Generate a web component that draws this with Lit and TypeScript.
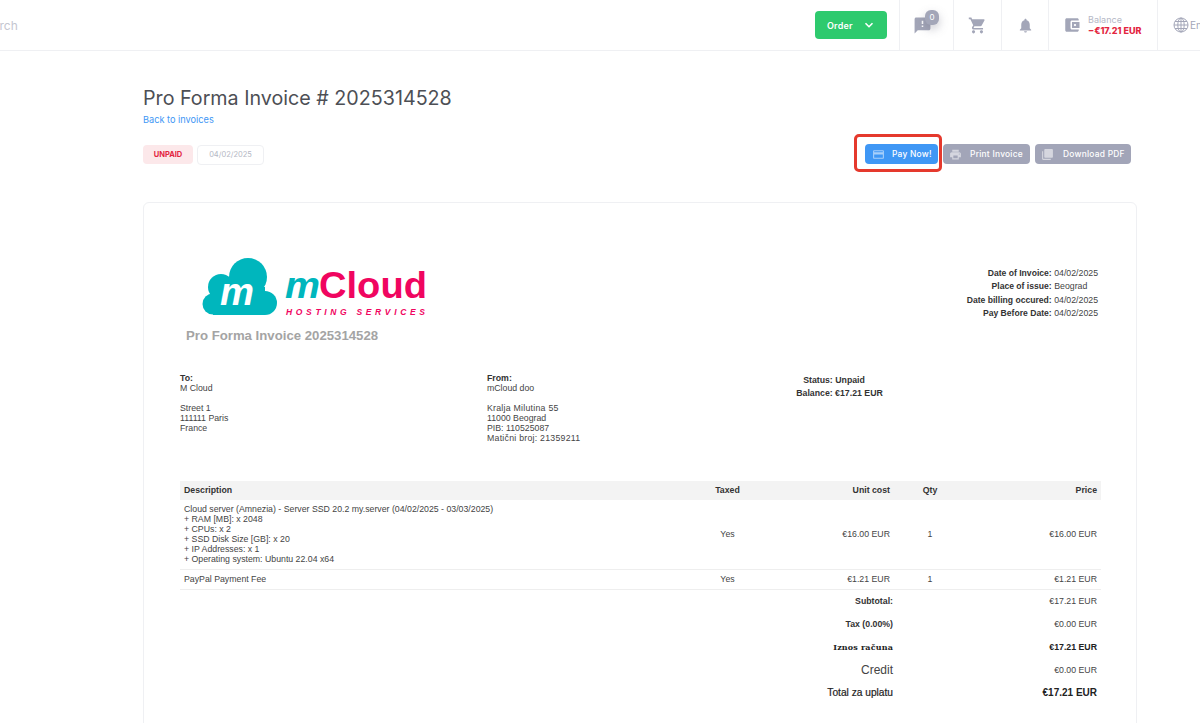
import { LitElement, html, css, svg } from "lit";
import { customElement } from "lit/decorators.js";

const ICONS = {
  chat: "M20 2H4c-1.1 0-1.99.9-1.99 2L2 22l4-4h14c1.1 0 2-.9 2-2V4c0-1.1-.9-2-2-2zm-7 12h-2v-2h2v2zm0-4h-2V6h2v4z",
  cart: "M7 18c-1.1 0-1.99.9-1.99 2S5.9 22 7 22s2-.9 2-2-.9-2-2-2zM1 2v2h2l3.6 7.59-1.35 2.45c-.16.28-.25.61-.25.96 0 1.1.9 2 2 2h12v-2H7.42c-.14 0-.25-.11-.25-.25l.03-.12.9-1.63h7.45c.75 0 1.41-.41 1.75-1.03l3.58-6.49c.08-.14.12-.31.12-.48 0-.55-.45-1-1-1H5.21l-.94-2H1zm16 16c-1.1 0-1.99.9-1.99 2s.89 2 1.99 2 2-.9 2-2-.9-2-2-2z",
  bell: "M12 22c1.1 0 2-.9 2-2h-4c0 1.1.89 2 2 2zm6-6v-5c0-3.07-1.64-5.64-4.5-6.32V4c0-.83-.67-1.5-1.5-1.5s-1.5.67-1.5 1.5v.68C7.63 5.36 6 7.92 6 11v5l-2 2v1h16v-1l-2-2z",
  wallet: "M21 18v1c0 1.1-.9 2-2 2H5c-1.11 0-2-.9-2-2V5c0-1.1.89-2 2-2h14c1.1 0 2 .9 2 2v1h-9c-1.11 0-2 .9-2 2v8c0 1.1.89 2 2 2h9zm-9-2h10V8H12v8zm4-2.5c-.83 0-1.5-.67-1.5-1.5s.67-1.5 1.5-1.5 1.5.67 1.5 1.5-.67 1.5-1.5 1.5z",
  card: "M20 4H4c-1.11 0-1.99.89-1.99 2L2 18c0 1.11.89 2 2 2h16c1.11 0 2-.89 2-2V6c0-1.11-.89-2-2-2zm0 14H4v-6h16v6zm0-10H4V6h16v2z",
  print: "M19 8H5c-1.66 0-3 1.34-3 3v6h4v4h12v-4h4v-6c0-1.66-1.34-3-3-3zm-3 11H8v-5h8v5zm3-7c-.55 0-1-.45-1-1s.45-1 1-1 1 .45 1 1-.45 1-1 1zm-1-9H6v4h12V3z",
  pdf: "M20 2H8c-1.1 0-2 .9-2 2v12c0 1.1.9 2 2 2h12c1.1 0 2-.9 2-2V4c0-1.1-.9-2-2-2zM4 6H2v14c0 1.1.9 2 2 2h14v-2H4V6z",
};

const icon = (name: keyof typeof ICONS, size: number) => html`
  <svg width=${size} height=${size} viewBox="0 0 24 24" fill="currentColor">
    ${svg`<path d=${ICONS[name]}></path>`}
  </svg>
`;

@customElement("app-root")
export class AppRoot extends LitElement {
  static override styles = css`
    :host {
      display: block;
      height: 723px;
      overflow: hidden;
      background: #fff;
      font-family: Inter, "Liberation Sans", sans-serif;
    }

    .topbar {
      display: flex;
      align-items: stretch;
      height: 50px;
      border-bottom: 1px solid #eff0f3;
      overflow: hidden;
    }

    .search {
      flex: 1;
      align-self: center;
      margin-left: -22px;
      color: #c4c6d0;
      font-size: 12px;
    }

    .order {
      align-self: center;
      display: flex;
      align-items: center;
      justify-content: space-between;
      box-sizing: border-box;
      width: 72px;
      height: 28px;
      margin-right: 12px;
      padding: 0 13px 0 12px;
      border-radius: 4px;
      background: #2eca6e;
      color: #fff;
      font-size: 9px;
      font-weight: 600;
      letter-spacing: 0.02em;
    }

    .cell {
      display: flex;
      align-items: center;
      justify-content: center;
      box-sizing: border-box;
      border-left: 1px solid #eff0f3;
      color: #a3a6b8;
    }

    .cell.chat { width: 54px; }
    .cell.cart { width: 48px; }
    .cell.bell { width: 47px; }
    .cell.balance { width: 109px; justify-content: flex-start; gap: 7px; padding-left: 14px; }
    .cell.lang { width: 43px; justify-content: flex-start; gap: 1px; padding-left: 15px; font-size: 10px; }

    .chat-wrap {
      display: flex;
      position: relative;
      margin: 1px 0 0 -8px;
    }

    .count {
      position: absolute;
      top: -6px;
      right: -7px;
      width: 14px;
      height: 15px;
      border-radius: 6px;
      background: #a3a6b8;
      box-shadow: 0 4px 10px rgba(100, 100, 120, 0.35);
      color: #fff;
      font-size: 8px;
      line-height: 15px;
      text-align: center;
    }

    .balance-text {
      display: flex;
      flex-direction: column;
      color: #b5b8c6;
      font-size: 9px;
      line-height: 11px;
    }

    .balance-text b {
      color: #e3263f;
      font-weight: 800;
    }

    .main {
      padding: 35px 63px 0 143px;
    }

    h1 {
      margin: 0;
      color: #4d4f55;
      font-size: 19.7px;
      font-weight: 400;
      line-height: 24px;
    }

    .back {
      display: block;
      margin-top: 4px;
      color: #3f97f5;
      font-size: 9.2px;
      line-height: 12px;
    }

    .actions {
      display: flex;
      align-items: center;
      gap: 4px;
      height: 21px;
      margin-top: 18px;
      padding-right: 6px;
    }

    .tag {
      display: flex;
      align-items: center;
      justify-content: center;
      box-sizing: border-box;
      height: 19px;
      border-radius: 4px;
      font-size: 7.5px;
    }

    .tag.unpaid {
      width: 50px;
      background: #fce8ea;
      color: #e3263f;
      font-weight: 700;
    }

    .tag.date {
      width: 67px;
      height: 20px;
      border: 1px solid #eff0f3;
      color: #b4b7c4;
    }

    .spacer { flex: 1; }

    .btn {
      display: flex;
      align-items: center;
      align-self: flex-start;
      box-sizing: border-box;
      height: 20px;
      border-radius: 4px;
      background: #a2a5b8;
      color: #fff;
      font-size: 8.4px;
      font-weight: 500;
      letter-spacing: 0.03em;
    }

    .btn svg { opacity: 0.55; }

    .btn.pay { width: 73px; padding-left: 7px; gap: 7px; background: #3f97f5; position: relative; }
    .btn.print { width: 87px; padding-left: 6px; gap: 8px; margin-left: 1px; }
    .btn.pdf { width: 96px; padding-left: 6px; gap: 9px; margin-left: 1px; }

    .highlight {
      position: absolute;
      inset: -10px -4px -8px -11px;
      border: 3px solid #e5392d;
      border-radius: 5px;
    }

    .invoice {
      margin-top: 37px;
      padding: 54px 35px 0 36px;
      height: 600px;
      border: 1px solid #eff0f3;
      border-radius: 6px;
      color: #444;
      font-family: "Liberation Sans", Arial, sans-serif;
      font-size: 8.75px;
      line-height: 10px;
    }

    .head {
      display: flex;
      justify-content: space-between;
    }

    .logo {
      display: block;
      margin-left: 22px;
    }

    .doc-title {
      margin: 8px 0 0 6px;
      color: #a4a4a4;
      font-size: 13.2px;
      font-weight: 700;
      line-height: 18px;
    }

    .dates {
      display: grid;
      grid-template-columns: auto auto;
      justify-content: end;
      column-gap: 2.5px;
      align-content: start;
      margin-top: 10px;
      padding-right: 3px;
      line-height: 13.4px;
    }

    .dates b {
      font-size: 8.6px;
      text-align: right;
    }

    b { color: #333; font-weight: 700; }

    .parties {
      display: grid;
      grid-template-columns: 307px 260px 174px;
      margin-top: 28px;
    }

    .wide { letter-spacing: 0.25px; }

    .status {
      padding-top: 1px;
      line-height: 13px;
      text-align: center;
    }

    .status .bal {
      display: block;
      padding-left: 11px;
    }

    table {
      width: 100%;
      margin-top: 38px;
      border-collapse: collapse;
      table-layout: fixed;
    }

    th {
      height: 19px;
      padding: 0 4px 2px;
      box-sizing: border-box;
      background: #f3f3f3;
      color: #333;
      font-weight: 700;
    }

    td {
      padding: 3px 4px 5px;
      border-bottom: 1px solid #eee;
    }

    .l { text-align: left; }
    .c { text-align: center; }
    .r { text-align: right; }

    td.desc { padding: 4px 4px 5px; }
    .fee td { height: 11px; }

    .totals td {
      height: 15px;
      border-bottom: 0;
      text-align: right;
    }

    .totals td.label { padding-right: 1px; font-weight: 700; color: #333; }
    .totals .serif td { font-weight: 700; color: #222; }
    .totals .serif td.label { font-family: "DejaVu Serif", serif; font-size: 8px; color: #222; letter-spacing: 0.02em; }
    .totals td.credit { font-size: 12px; font-weight: 400; color: #444; }
    .totals .grand td { font-size: 10px; color: #222; font-weight: 700; }
    .totals .grand td.label { font-size: 10.2px; font-weight: 400; -webkit-text-stroke: 0.2px #222; }
  `;

  private renderLogo() {
    return html`
      <svg class="logo" width="226" height="62" viewBox="0 0 226 62">
        <g fill="#00b6bd">
          <circle cx="46" cy="20" r="19"></circle>
          <circle cx="19" cy="30" r="13"></circle>
          <circle cx="11" cy="47" r="10.5"></circle>
          <circle cx="63" cy="46" r="12"></circle>
          <rect x="11" y="30" width="52" height="28"></rect>
        </g>
        <text x="18" y="48" fill="#fff" font-family="Liberation Sans" font-size="38" font-weight="700" font-style="italic" textLength="34" lengthAdjust="spacingAndGlyphs">m</text>
        <text x="83" y="41" fill="#00b6bd" font-family="Liberation Sans" font-size="36" font-weight="700" font-style="italic" textLength="35" lengthAdjust="spacingAndGlyphs">m</text>
        <text x="117" y="41" fill="#f0055f" font-family="Liberation Sans" font-size="36" font-weight="700" textLength="108" lengthAdjust="spacingAndGlyphs">Cloud</text>
        <text x="84" y="58" fill="#f0055f" font-family="Liberation Sans" font-size="8.5" font-style="italic" font-weight="700" textLength="139">HOSTING SERVICES</text>
      </svg>
    `;
  }

  override render() {
    return html`
      <header class="topbar">
        <div class="search">Search</div>
        <div class="order">
          <span>Order</span>
          <svg width="10" height="10" viewBox="0 0 10 10" fill="none" stroke="#fff" stroke-width="1.6">
            <path d="M1.5 3.2 5 6.7l3.5-3.5"></path>
          </svg>
        </div>
        <div class="cell chat">
          <span class="chat-wrap">${icon("chat", 19)}<span class="count">0</span></span>
        </div>
        <div class="cell cart">${icon("cart", 19)}</div>
        <div class="cell bell">${icon("bell", 17)}</div>
        <div class="cell balance">
          ${icon("wallet", 18)}
          <div class="balance-text"><span>Balance</span><b>−€17.21 EUR</b></div>
        </div>
        <div class="cell lang">
          <svg width="16" height="16" viewBox="0 0 16 16" fill="none" stroke="currentColor" stroke-width="1" style="flex:none">
            <circle cx="8" cy="8" r="7"></circle>
            <ellipse cx="8" cy="8" rx="3.2" ry="7"></ellipse>
            <path d="M1 8h14M2 4.5h12M2 11.5h12M8 1v14"></path>
          </svg>
          <span>En</span>
        </div>
      </header>

      <main class="main">
        <h1>Pro Forma Invoice # 2025314528</h1>
        <a class="back">Back to invoices</a>

        <div class="actions">
          <span class="tag unpaid">UNPAID</span>
          <span class="tag date">04/02/2025</span>
          <span class="spacer"></span>
          <span class="btn pay">${icon("card", 13)}<span>Pay Now!</span><span class="highlight"></span></span>
          <span class="btn print">${icon("print", 13)}<span>Print Invoice</span></span>
          <span class="btn pdf">${icon("pdf", 13)}<span>Download PDF</span></span>
        </div>

        <section class="invoice">
          <div class="head">
            <div>
              ${this.renderLogo()}
              <div class="doc-title">Pro Forma Invoice 2025314528</div>
            </div>
            <div class="dates">
              <b>Date of Invoice:</b><span>04/02/2025</span>
              <b>Place of issue:</b><span>Beograd</span>
              <b>Date billing occured:</b><span>04/02/2025</span>
              <b>Pay Before Date:</b><span>04/02/2025</span>
            </div>
          </div>

          <div class="parties">
            <div>
              <b>To:</b><br />M Cloud<br /><br />Street 1<br />111111 Paris<br />France
            </div>
            <div>
              <b>From:</b><br />mCloud doo<br /><br /><span class="wide">Kralja Milutina 55</span><br />11000 Beograd<br />PIB: 110525087<br /><span class="wide">Matični broj: 21359211</span>
            </div>
            <div class="status">
              <b>Status: Unpaid</b><b class="bal">Balance: €17.21 EUR</b>
            </div>
          </div>

          <table>
            <colgroup>
              <col style="width: 520px" />
              <col style="width: 55px" />
              <col style="width: 139px" />
              <col style="width: 72px" />
              <col />
            </colgroup>
            <thead>
              <tr>
                <th class="l">Description</th>
                <th class="c">Taxed</th>
                <th class="r">Unit cost</th>
                <th class="c">Qty</th>
                <th class="r">Price</th>
              </tr>
            </thead>
            <tbody>
              <tr>
                <td class="desc">
                  Cloud server (Amnezia) - Server SSD 20.2 my.server (04/02/2025 - 03/03/2025)<br />
                  + RAM [MB]: x 2048<br />
                  + CPUs: x 2<br />
                  + SSD Disk Size [GB]: x 20<br />
                  + IP Addresses: x 1<br />
                  + Operating system: Ubuntu 22.04 x64
                </td>
                <td class="c">Yes</td>
                <td class="r">€16.00 EUR</td>
                <td class="c">1</td>
                <td class="r">€16.00 EUR</td>
              </tr>
              <tr class="fee">
                <td>PayPal Payment Fee</td>
                <td class="c">Yes</td>
                <td class="r">€1.21 EUR</td>
                <td class="c">1</td>
                <td class="r">€1.21 EUR</td>
              </tr>
            </tbody>
            <tbody class="totals">
              <tr>
                <td class="label" colspan="3">Subtotal:</td>
                <td colspan="2">€17.21 EUR</td>
              </tr>
              <tr>
                <td class="label" colspan="3">Tax (0.00%)</td>
                <td colspan="2">€0.00 EUR</td>
              </tr>
              <tr class="serif">
                <td class="label" colspan="3">Iznos računa</td>
                <td colspan="2">€17.21 EUR</td>
              </tr>
              <tr>
                <td class="label credit" colspan="3">Credit</td>
                <td colspan="2">€0.00 EUR</td>
              </tr>
              <tr class="grand">
                <td class="label" colspan="3">Total za uplatu</td>
                <td colspan="2">€17.21 EUR</td>
              </tr>
            </tbody>
          </table>
        </section>
      </main>
    `;
  }
}

declare global {
  interface HTMLElementTagNameMap {
    "app-root": AppRoot;
  }
}
